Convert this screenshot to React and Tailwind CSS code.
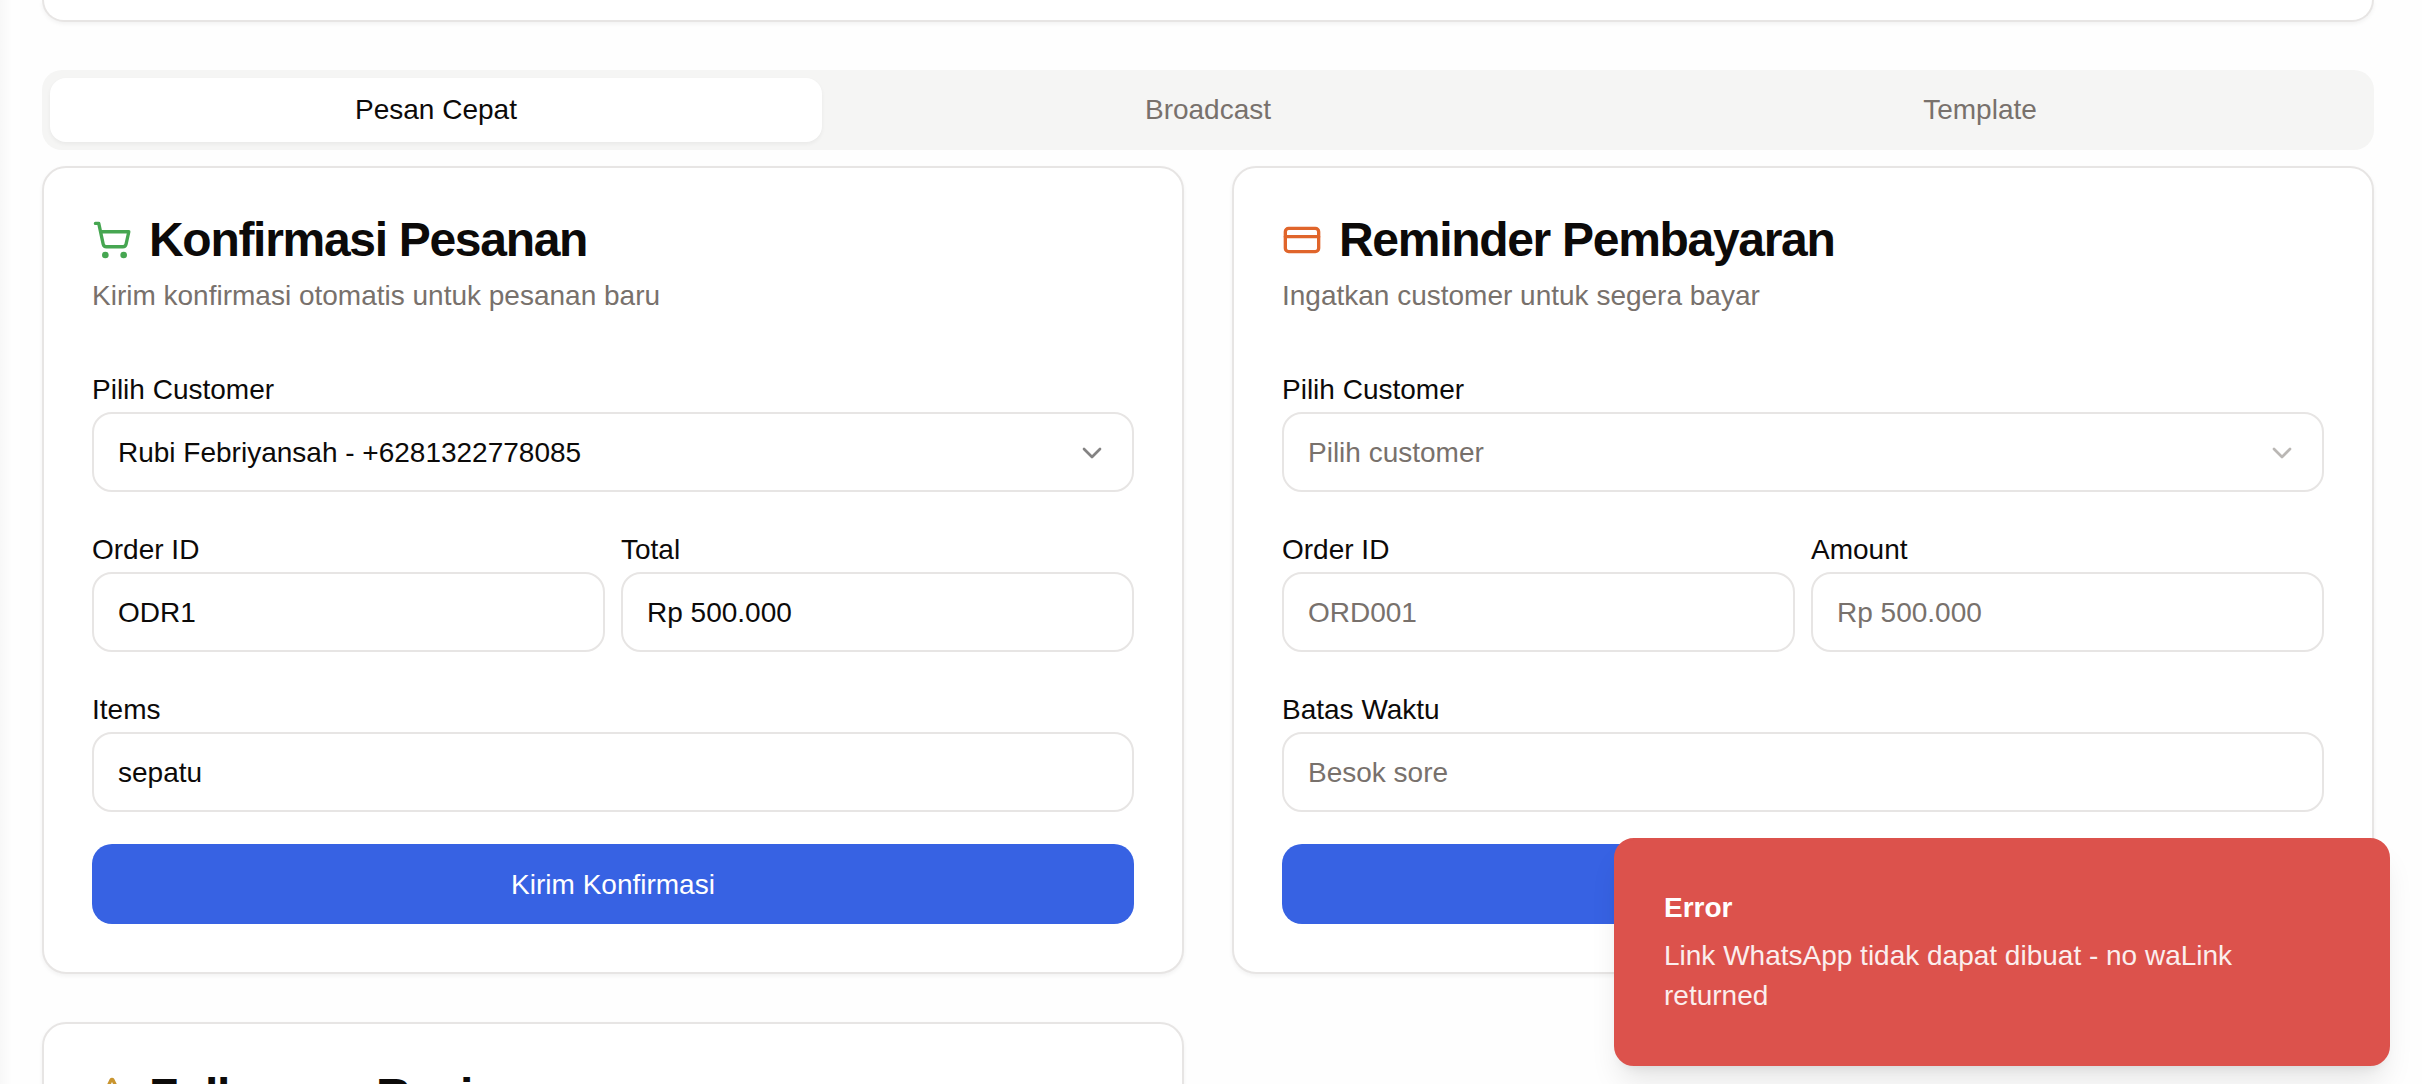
import { ChevronDown, CreditCard, ShoppingCart, Star } from "lucide-react";

const fieldBox = "flex h-20 w-full items-center rounded-[20px] border-2 border-[#e7e5e4] bg-white px-6 pt-[2px] text-[28px] leading-10";
const cardShadow = "shadow-[0_2px_4px_rgba(0,0,0,0.05)]";

function Field({ label, value, placeholder, select }) {
  return (
    <div className="flex min-w-0 flex-1 flex-col gap-2">
      <label className="pt-3 text-[28px] leading-7 text-[#0c0a09]">{label}</label>
      <div className={`${fieldBox} justify-between ${value ? "text-[#0c0a09]" : "text-[#78716c]"}`}>
        <span>{value || placeholder}</span>
        {select && <ChevronDown size={32} strokeWidth={2} className={value ? "text-[#0c0a09] opacity-50" : "text-[#78716c] opacity-50"} />}
      </div>
    </div>
  );
}

function Card({ icon, title, desc, children }) {
  return (
    <div className={`rounded-3xl border-2 border-[#e7e5e4] bg-white ${cardShadow}`}>
      <div className="flex flex-col gap-3 p-12">
        <h3 className="flex items-center gap-[17px] text-5xl leading-[48px] font-bold tracking-[-1.3px] text-[#0c0a09]">
          {icon}
          {title}
        </h3>
        <p className="text-[28px] leading-10 text-[#78716c]">{desc}</p>
      </div>
      <div className="flex flex-col gap-8 px-12 pb-12">{children}</div>
    </div>
  );
}

export default function App() {
  return (
    <div className="relative h-[1084px] overflow-hidden bg-[#fefefe] pr-[48px] pl-[42px] font-['Liberation_Sans',Arial,sans-serif]">
      <div className="absolute inset-y-0 left-0 w-3 bg-gradient-to-r from-[#f8f8f8] to-transparent" />
      <div className={`h-[22px] rounded-b-3xl border-x-2 border-b-2 border-[#e7e5e4] bg-white ${cardShadow}`} />

      <div className="mt-12 grid h-20 grid-cols-3 rounded-[20px] bg-[#f5f5f4] p-2 text-[28px] text-[#78716c]">
        <div className={`flex items-center justify-center rounded-2xl bg-white text-[#0c0a09] ${cardShadow}`}>Pesan Cepat</div>
        <div className="flex items-center justify-center">Broadcast</div>
        <div className="flex items-center justify-center">Template</div>
      </div>

      <div className="mt-4 grid grid-cols-2 gap-12">
        <Card
          icon={<ShoppingCart size={40} className="shrink-0 text-[#46a651]" />}
          title="Konfirmasi Pesanan"
          desc="Kirim konfirmasi otomatis untuk pesanan baru"
        >
          <Field label="Pilih Customer" value="Rubi Febriyansah - +6281322778085" select />
          <div className="flex gap-4">
            <Field label="Order ID" value="ODR1" />
            <Field label="Total" value="Rp 500.000" />
          </div>
          <Field label="Items" value="sepatu" />
          <button className="h-20 w-full rounded-[20px] bg-[#3762e3] pt-[2px] text-[28px] text-white">Kirim Konfirmasi</button>
        </Card>

        <Card
          icon={<CreditCard size={40} className="shrink-0 text-[#e0652b]" />}
          title="Reminder Pembayaran"
          desc="Ingatkan customer untuk segera bayar"
        >
          <Field label="Pilih Customer" placeholder="Pilih customer" select />
          <div className="flex gap-4">
            <Field label="Order ID" placeholder="ORD001" />
            <Field label="Amount" placeholder="Rp 500.000" />
          </div>
          <Field label="Batas Waktu" placeholder="Besok sore" />
          <button className="h-20 w-full rounded-[20px] bg-[#3762e3] pt-[2px] text-[28px] text-white">Kirim Reminder</button>
        </Card>

        <Card
          icon={<Star size={40} className="shrink-0 text-[#c9952f]" />}
          title="Follow-up Review"
          desc=""
        />
      </div>

      <div className="absolute right-8 bottom-[18px] w-[776px] rounded-[20px] border-2 border-[#dc524c] bg-[#dc524c] p-12 pr-16 text-[28px] leading-10 text-white shadow-[0_20px_30px_-6px_rgba(0,0,0,0.1),0_8px_12px_-8px_rgba(0,0,0,0.1)]">
        <div className="font-semibold">Error</div>
        <div className="mt-2 opacity-90">Link WhatsApp tidak dapat dibuat - no waLink returned</div>
      </div>
    </div>
  );
}
